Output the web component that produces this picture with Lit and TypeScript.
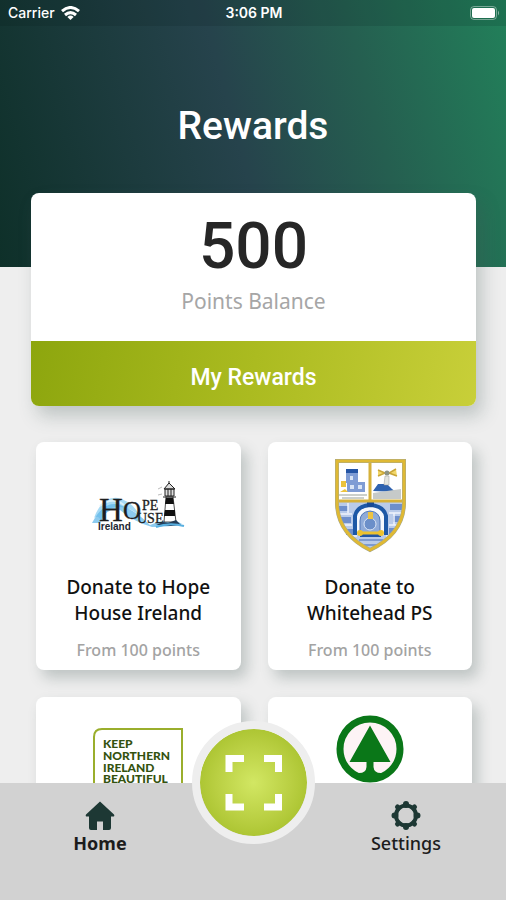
import { LitElement, html, css, svg, TemplateResult } from "lit";
import { customElement, property } from "lit/decorators.js";

const hopeHouse = svg`
  <path d="M16 62 Q24 40 40 42 Q54 45 62 60 Q50 50 40 51 Q28 50 24 66 Q20 58 16 62Z" fill="#a6daf5"/>
  <path d="M14 67 Q26 44 42 49 Q57 54 72 69 Q92 60 104 68 Q92 71 74 71 Q56 66 42 54 Q29 50 22 67Z" fill="#5db5e8" opacity=".7"/>
  <path d="M22 50 Q34 40 46 49" fill="none" stroke="#d9f0fb" stroke-width="2"/>
  <text x="21" y="65" class="serif" font-size="33">H</text>
  <text x="45" y="63" class="serif" font-size="25">O</text>
  <text x="64" y="54" class="serif" font-size="14">PE</text>
  <text x="59" y="67" class="serif" font-size="14">USE</text>
  <text x="20" y="74" class="sans" font-size="10">Ireland</text>
  <path d="M86 66 L88 41 H95 L98 66Z" fill="#fff" stroke="#222" stroke-width=".8"/>
  <path d="M88 42 H95 L96 48 H87Z M87 54 H97 L97 60 H86Z" fill="#111"/>
  <path d="M85 41 H98 M87 33 H96 V40 H87Z M86 33 L91 27 L97 33Z M91 25 V28 M90 33 V40 M93 33 V40" fill="#ddd" stroke="#222"/>
  <path d="M80 33 L84 31 M80 39 L84 38" stroke="#bbb"/>
  <path d="M78 69 L85 66 L90 67 L98 64 L103 69 L92 70 L84 69Z" fill="#243d58"/>
  <path d="M78 71 Q91 66 106 70" fill="none" stroke="#58afe0" stroke-width="2"/>`;

const crest = svg`
  <path d="M27 5 H94 V48 Q94 78 60 94 Q27 78 27 48Z" fill="#fff"/>
  <path d="M28 46 H93 Q95 78 60 93 Q27 78 28 46Z" fill="#b9cbea"/>
  <path d="M28 50 H38 V55 H28Z M80 48 H92 V54 H80Z M31 61 H41 V67 H31Z M83 60 H92 V66 H83Z M36 73 H43 V79 H36Z M79 72 H85 V78 H79Z" fill="#6e8fcc"/>
  <path d="M30 58 H42 M79 57 H92 M31 69 H42 M79 69 H89 M41 80 H47 M76 80 H81 M38 47 V57 M84 57 V69" stroke="#eff4fc" stroke-width="1.5"/>
  <path d="M36 15 H39 V13 H48 V26 H55 V36 H37 V27 H36Z" fill="#7f9cd4"/>
  <path d="M36 13 H48 V17 H36Z" fill="#2454a4"/>
  <path d="M40 20 H43 V24 H40Z M48 29 H52 V33 H48Z M40 29 H44 V33 H40Z" fill="#d9e4f5"/>
  <path d="M31 25 H36 V31 H31Z M30 36 L35 33 L38 36 H30Z" fill="#ecc33c"/>
  <path d="M29 39 H57 M32 42 H54" stroke="#ccd0cb" stroke-width="2"/>
  <path d="M63 35 L68 28 L77 28 L82 33 L86 36Z" fill="#2e62af"/>
  <path d="M63 37 L91 33 V43 H63Z" fill="#c6cac9"/>
  <path d="M75 20 H79 V29 H74Z" fill="#e4e5df" stroke="#999" stroke-width=".5"/>
  <path d="M68 14 L75 17 L68 20 M86 13 L79 17 L87 20" fill="#f2d769" stroke="#c8a436" stroke-width="1.5"/>
  <circle cx="77" cy="17" r="2.5" fill="#8c9384"/>
  <path d="M45 79 V60 Q47 50 60 49 Q74 50 76 60 V79" fill="#f5f8fd" stroke="#1d58a6" stroke-width="4"/>
  <path d="M57 45 H64 V51 H57Z" fill="#174a97"/>
  <path d="M50 77 V65 Q50 56 60 55 Q70 56 70 65 V77Z" fill="#8fabd9" stroke="#5178b8"/>
  <circle cx="60" cy="68" r="6" fill="#6b8fc9" stroke="#dce6f5"/>
  <path d="M58 56 H63 V63 H58Z" fill="#edc342"/>
  <path d="M50 76 H71 V81 H50Z" fill="#2256a5"/>
  <circle cx="50" cy="77" r="3" fill="#edc22f"/><circle cx="71" cy="77" r="3" fill="#edc22f"/>
  <path d="M51 77 H70" stroke="#edc22f" stroke-width="3"/>
  <path d="M49 84 H73 M54 89 H67" stroke="#7d9ad0" stroke-width="2"/>
  <path d="M27 45 H94 M60 5 V45" stroke="#d6b13a" stroke-width="3" fill="none"/>
  <path d="M27 5 H94 V48 Q93 78 60 94 Q28 78 27 48Z" fill="none" stroke="#a3a792" stroke-width="4"/>
  <path d="M27 5 H94 V48 Q93 78 60 94 Q28 78 27 48Z" fill="none" stroke="#dfb934" stroke-width="3"/>`;

const keepBeautiful = svg`
  <path d="M16 84 V26 Q16 18 24 18 H104 V84Z" fill="#fff" stroke="#9aae2c" stroke-width="2"/>
  <g class="plate" font-size="12">
    <text x="25" y="37">KEEP</text>
    <text x="25" y="49">NORTHERN</text>
    <text x="25" y="61">IRELAND</text>
    <text x="25" y="72">BEAUTIFUL</text>
  </g>`;

const fir = svg`
  <circle cx="60" cy="38" r="30" fill="#fdf3f5" stroke="#0a7718" stroke-width="7"/>
  <path d="M60 14.500 L80.500 51 H63.500 V56 Q64 62 71 62 H77 Q70 69 60 69 Q50 69 43 62 H49 Q56 62 56.500 56 V51 H39.500Z" fill="#0a7718"/>`;

@customElement("reward-card")
export class RewardCard extends LitElement {
  @property({ attribute: false }) logo?: TemplateResult;
  @property() name = "";
  @property() price = "";

  static styles = css`
    :host { display: block; min-width: 0; }
    .card {
      box-sizing: border-box;
      min-height: 228px;
      padding: 14px 16px 8px;
      border-radius: 8px;
      background: #fff;
      box-shadow: 6px 8px 14px rgba(70, 90, 85, 0.28);
      text-align: center;
    }
    .logo { display: block; width: 120px; height: 100px; margin: 0 auto 18px; }
    .serif { font-family: "Liberation Serif", serif; fill: #1d1d1d; stroke: #1d1d1d; stroke-width: 0.3; }
    .sans { font-family: "Liberation Sans", sans-serif; font-weight: 700; fill: #1c2733; }
    .plate { font-family: Lato, sans-serif; font-weight: 900; fill: #34520f; }
    .name { margin: 0; font-size: 19px; line-height: 26px; font-weight: 500; color: #111; }
    .price { margin: 12px 0 0; font-size: 16px; line-height: 24px; font-weight: 500; color: #a3a3a3; }
  `;

  render() {
    return html`<article class="card">
      <svg class="logo" viewBox="0 0 120 100" aria-hidden="true">${this.logo}</svg>
      ${this.name ? html`<h2 class="name">${this.name}</h2>` : null}
      ${this.price ? html`<p class="price">${this.price}</p>` : null}
    </article>`;
  }
}

@customElement("app-root")
export class AppRoot extends LitElement {
  static styles = css`
    :host {
      display: flex;
      flex-direction: column;
      height: 100vh;
      overflow: hidden;
      background: #eee;
      font-family: "Noto Sans", sans-serif;
    }
    .scroll { flex: 1; min-height: 0; overflow-y: auto; scrollbar-width: none; }
    .hero {
      height: 267px;
      background: linear-gradient(75deg, #0e3029 0%, #26434c 47%, #255f50 72%, #22805a 100%);
      color: #fff;
    }
    .status {
      display: grid;
      grid-template-columns: 1fr auto 1fr;
      align-items: center;
      height: 26px;
      padding: 0 6px 0 8px;
      background: rgba(0, 20, 20, 0.12);
      font: 500 14px/26px Inter, sans-serif;
    }
    .carrier { display: flex; align-items: center; gap: 6px; }
    .time { font-size: 14px; font-weight: 600; }
    .battery { justify-self: end; }
    .status svg { display: block; }
    .title {
      margin: 0;
      padding-top: 76px;
      text-align: center;
      font: 500 39px/48px Roboto, sans-serif;
    }
    .balance {
      margin: -74px 30px 0 31px;
      border-radius: 8px;
      background: #fff;
      box-shadow: 6px 10px 18px rgba(70, 90, 85, 0.28);
      text-align: center;
      position: relative;
    }
    .points { margin: 0; padding-top: 18px; font: 500 64px/72px Roboto, sans-serif; color: #262626; }
    .caption { margin: 0; padding: 4px 0 26px; font-size: 21px; line-height: 28px; font-weight: 400; color: #a6a6a6; }
    .mine {
      display: block;
      width: 100%;
      height: 65px;
      padding: 8px 0 0;
      border: 0;
      border-radius: 0 0 8px 8px;
      background: linear-gradient(100deg, #8da60e, #abbb20 50%, #c8cf39);
      color: #fff;
      font: 500 23px/28px Roboto, sans-serif;
    }
    .grid {
      display: grid;
      grid-template-columns: 1fr 1fr;
      gap: 27px;
      padding: 36px 34px 27px 36px;
    }
    .nav {
      position: relative;
      flex: none;
      display: flex;
      justify-content: space-between;
      box-sizing: border-box;
      height: 117px;
      padding: 16px 44px 0;
      background: #d2d2d2;
    }
    .tab {
      display: flex;
      flex-direction: column;
      align-items: center;
      width: 112px;
      height: 60px;
      color: #1c1c1c;
      font-size: 18px;
      line-height: 24px;
      font-weight: 500;
      text-decoration: none;
    }
    .tab svg { display: block; width: 32px; height: 32px; }
    .tab.active { font-weight: 700; }
    .scan {
      position: absolute;
      top: -62px;
      left: calc(50% - 61px);
      width: 123px;
      height: 123px;
      padding: 0;
      border: 8px solid #eee;
      border-radius: 50%;
      background: radial-gradient(circle, #d2e763 0%, #b9cf42 50%, #9cb81f 100%) padding-box;
    }
    .scan svg { display: block; margin: auto; }
  `;

  render() {
    return html`
      <main class="scroll">
        <header class="hero">
          <div class="status">
            <span class="carrier">Carrier
              <svg width="19" height="14" viewBox="0 0 19 14" fill="none" stroke="#fff" stroke-width="3" aria-hidden="true">
                <path d="M1 5.200 Q9.500 -2.200 18 5.200"/>
                <path d="M4 9 Q9.500 4.200 15 9"/>
                <path d="M6.400 11 Q9.500 8.200 12.600 11 L9.500 14Z" fill="#fff" stroke="none"/>
              </svg>
            </span>
            <span class="time">3:06 PM</span>
            <svg class="battery" width="30" height="14" viewBox="0 0 30 14" aria-hidden="true">
              <rect x=".5" y=".5" width="26" height="13" rx="3.500" fill="none" stroke="#fff" opacity=".4"/>
              <rect x="2" y="2" width="23" height="10" rx="2" fill="#fff"/>
              <path d="M28 4.500 Q30 7 28 9.500Z" fill="#fff" opacity=".5"/>
            </svg>
          </div>
          <h1 class="title">Rewards</h1>
        </header>
        <section class="balance">
          <p class="points">500</p>
          <p class="caption">Points Balance</p>
          <button class="mine">My Rewards</button>
        </section>
        <section class="grid">
          <reward-card .logo=${hopeHouse} name="Donate to Hope House Ireland" price="From 100 points"></reward-card>
          <reward-card .logo=${crest} name="Donate to Whitehead PS" price="From 100 points"></reward-card>
          <reward-card .logo=${keepBeautiful}></reward-card>
          <reward-card .logo=${fir}></reward-card>
        </section>
      </main>
      <nav class="nav">
        <a class="tab active" href="#home">
          <svg viewBox="0 0 32 32" fill="#1d3834" aria-hidden="true">
            <path d="M16 2.500 L30 15.500 Q31 17.500 29 17.500 H27 V29 Q27 31 25 31 H19 V22.500 H13 V31 H7 Q5 31 5 29 V17.500 H3 Q1 17.500 2 15.500Z"/>
          </svg>
          Home
        </a>
        <a class="tab" href="#settings">
          <svg viewBox="0 0 32 32" fill="none" stroke="#1d3834" aria-hidden="true">
            <circle cx="16" cy="16.500" r="10" stroke-width="4"/>
            <g stroke-width="6" stroke-linecap="round">
              <path d="M16 5 V6 M16 27 V28 M4.500 16.500 H5.500 M26.500 16.500 H27.500"/>
              <path stroke-width="5" d="M7.500 8 L8.500 9 M24.500 8 L23.500 9 M7.500 25 L8.500 24 M24.500 25 L23.500 24"/>
            </g>
          </svg>
          Settings
        </a>
        <button class="scan" aria-label="Scan">
          <svg width="58" height="56" viewBox="0 0 58 56" fill="none" stroke="#fff" stroke-width="7" aria-hidden="true">
            <path d="M4 17 V3.500 H19 M39 3.500 H53.500 V17 M4 39 V52 H19 M39 52 H53.500 V39"/>
          </svg>
        </button>
      </nav>
    `;
  }
}
